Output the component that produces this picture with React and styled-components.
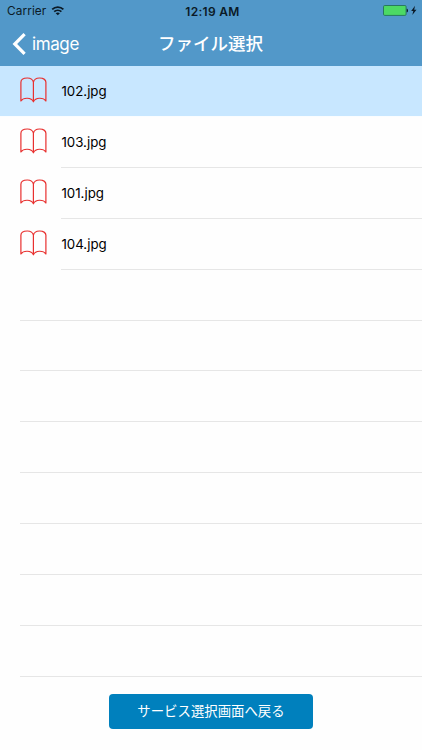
import React from "react";
import styled, { createGlobalStyle } from "styled-components";

const files = ["102.jpg", "103.jpg", "101.jpg", "104.jpg"];
const emptyRows = [0, 1, 2, 3, 4, 5, 6, 7];

const BookIcon = () => (
  <svg width="28" height="28" viewBox="0 0 28 28" fill="none" stroke="#e8302f" strokeWidth="1.2" strokeLinejoin="round">
    <path d="M13.400 5.200C12.800 2.400 10.400 1 7.300 1C3.600 1 .9 2.600 .9 5.200V24C3.500 20.200 11.300 20.200 13.400 24.800C15.500 20.200 23.300 20.200 25.900 24V5.200C25.900 2.600 23.200 1 19.500 1C16.400 1 14 2.400 13.400 5.200V24.800" />
  </svg>
);

const WifiIcon = () => (
  <svg width="14" height="10" viewBox="0 0 14 10" fill="none" stroke="#0b1a26" strokeWidth="1.8">
    <path d="M1.200 3.400C4.300 .4 9.300 .4 12.400 3.400" />
    <path d="M3.200 5.700C5.200 3.900 8.400 3.900 10.400 5.700" />
    <path d="M6.800 9.300L4.700 7.200C5.900 6.200 7.700 6.200 8.900 7.200Z" fill="#0b1a26" stroke="none" />
  </svg>
);

const BatteryIcon = () => (
  <svg width="34" height="12" viewBox="0 0 34 12">
    <rect x=".5" y=".5" width="22.600" height="9.900" rx="1.200" fill="#4cd964" stroke="#28785f" />
    <path d="M23.700 3.700H24.200C25.300 4.200 25.300 6.800 24.200 7.300H23.700Z" fill="#0b1a26" />
    <path d="M32 .8L28.200 6H30.300L29.300 9.900L33.500 4.700H31.200Z" fill="#0b1a26" />
  </svg>
);

const App = () => {
  return (
    <>
      <GlobalStyle />
      <Screen>
        <Header>
          <StatusBar>
            <Carrier>
              <span>Carrier</span>
              <WifiIcon />
            </Carrier>
            <Clock>12:19 AM</Clock>
            <Battery>
              <BatteryIcon />
            </Battery>
          </StatusBar>
          <NavBar>
            <BackButton>
              <svg width="14" height="22" viewBox="0 0 14 22" fill="none" stroke="#fff" strokeWidth="3.200">
                <path d="M12.600 1.200L2.800 11L12.600 20.800" />
              </svg>
              <span>image</span>
            </BackButton>
            <Title>ファイル選択</Title>
          </NavBar>
        </Header>
        <List>
          {files.map((name, i) => (
            <Row key={name} $selected={i === 0}>
              <BookIcon />
              <FileName $selected={i === 0}>{name}</FileName>
            </Row>
          ))}
          {emptyRows.map((n) => (
            <Row key={n}>
              <EmptyLine />
            </Row>
          ))}
        </List>
        <Footer>
          <ReturnButton>サービス選択画面へ戻る</ReturnButton>
        </Footer>
      </Screen>
    </>
  );
};

const GlobalStyle = createGlobalStyle`
  * {
    box-sizing: border-box;
  }
  body {
    margin: 0;
    background-color: #fefefe;
    font-family: Inter, "Noto Sans CJK JP", sans-serif;
  }
  svg {
    display: block;
    flex-shrink: 0;
  }
`;

const Screen = styled.div`
  display: flex;
  flex-direction: column;
  width: 422px;
  height: 750px;
  overflow: hidden;
`;

const Header = styled.header`
  height: 66px;
  flex-shrink: 0;
  background-color: #5298c9;
`;

const StatusBar = styled.div`
  display: grid;
  grid-template-columns: 1fr auto 1fr;
  align-items: center;
  height: 22px;
  padding: 0 5px 0 7px;
  color: #0b1a26;
`;

const Carrier = styled.div`
  display: flex;
  align-items: center;
  gap: 5px;
  font-size: 11.8px;
  letter-spacing: 0.1px;
`;

const Clock = styled.div`
  margin-left: 1px;
  font-size: 12px;
  font-weight: 600;
  letter-spacing: 0.3px;
`;

const Battery = styled.div`
  display: flex;
  justify-content: flex-end;
`;

const NavBar = styled.nav`
  display: grid;
  grid-template-columns: 1fr auto 1fr;
  align-items: center;
  height: 43px;
  padding: 0 13px 0 12px;
  color: #ffffff;
`;

const BackButton = styled.div`
  display: flex;
  align-items: center;
  gap: 6px;
  font-size: 17px;
  letter-spacing: -0.4px;
`;

const Title = styled.h1`
  margin: 0;
  font-size: 17.5px;
  font-weight: 500;
  line-height: 24px;
`;

const List = styled.div`
  flex-shrink: 0;
`;

const Row = styled.div`
  display: flex;
  align-items: center;
  height: 50.92px;
  padding-left: 20px;
  background-color: ${(props) => (props.$selected ? "#c8e7ff" : "#fefefe")};
  border-bottom: ${(props) => (props.$selected ? "1px solid #fafdff" : "none")};
`;

const FileName = styled.div`
  display: flex;
  align-items: center;
  flex: 1;
  height: 100%;
  margin-left: 13.4px;
  border-bottom: ${(props) => (props.$selected ? "none" : "1px solid #e6e6e6")};
  font-size: 13.3px;
  color: #000000;
`;

const EmptyLine = styled.div`
  flex: 1;
  height: 100%;
  border-bottom: 1px solid #e6e6e6;
`;

const Footer = styled.footer`
  display: flex;
  justify-content: center;
  padding-top: 17px;
`;

const ReturnButton = styled.button`
  width: 204px;
  height: 35px;
  padding: 0;
  border: none;
  border-radius: 4px;
  background-color: #0080bd;
  color: #ffffff;
  font-family: inherit;
  font-size: 13.4px;
  line-height: 20px;
`;

export default App;
